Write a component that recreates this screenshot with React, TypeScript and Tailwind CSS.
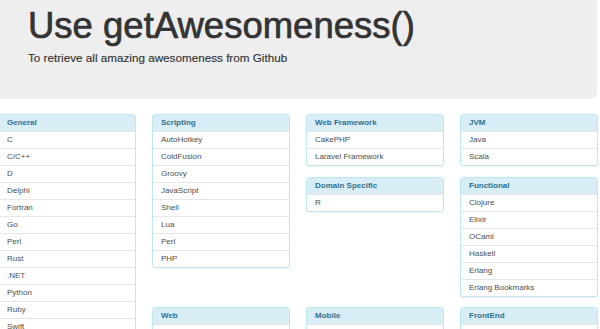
const general = ['C', 'C/C++', 'D', 'Delphi', 'Fortran', 'Go', 'Perl', 'Rust', '.NET', 'Python', 'Ruby', 'Swift'];

function Panel({ title, items, className = '' }: { title: string; items: string[]; className?: string }) {
  return (
    <div className={`rounded-[3px] border border-[#bce8f1] bg-white shadow-[0_1px_1px_rgba(0,0,0,0.05)] ${className}`}>
      <div className="flex h-[16px] items-center rounded-t-[2px] bg-[#d9edf7] px-[8px] text-[8px] font-bold text-[#31708f]">
        {title}
      </div>
      {items.map((item) => (
        <div key={item} className="flex h-[17px] items-center border-t border-[#e6e6e6] px-[8px] text-[8px] text-[#4d4d4d]">
          {item}
        </div>
      ))}
    </div>
  );
}

export default function App() {
  return (
    <div className="h-[329px] w-[600px] overflow-hidden bg-white font-['Liberation_Sans',Arial,sans-serif]">
      <div className="-ml-[2px] w-[600px]">
        {/* Jumbotron */}
        <div className="h-[99px] w-[599px] rounded-br-[6px] bg-[#eeeeee] pl-[30px] pt-[6px] text-[#333]">
          <h1 className="text-[36.5px] leading-[40px] [-webkit-text-stroke:0.7px_#333]">Use getAwesomeness()</h1>
          <p className="mt-[4px] text-[11.7px] leading-[16px] [-webkit-text-stroke:0.15px_#333]">To retrieve all amazing awesomeness from Github</p>
        </div>

        <div className="mt-[15px] flex gap-[16px]">
          <div className="w-[138px]">
            <Panel title="General" items={general} />
          </div>

          <div className="flex w-[446px] flex-col">
            <div className="flex items-start gap-[16px]">
              <div className="w-[138px]">
                <Panel title="Scripting" items={['AutoHotkey', 'ColdFusion', 'Groovy', 'JavaScript', 'Shell', 'Lua', 'Perl', 'PHP']} />
              </div>
              <div className="w-[138px]">
                <Panel title="Web Framework" items={['CakePHP', 'Laravel Framework']} className="mb-[11px]" />
                <Panel title="Domain Specific" items={['R']} />
              </div>
              <div className="w-[138px]">
                <Panel title="JVM" items={['Java', 'Scala']} className="mb-[11px]" />
                <Panel title="Functional" items={['Clojure', 'Elixir', 'OCaml', 'Haskell', 'Erlang', 'Erlang Bookmarks']} />
              </div>
            </div>

            <div className="mt-[10px] flex items-start gap-[16px]">
              <div className="w-[138px]">
                <Panel title="Web" items={['']} />
              </div>
              <div className="w-[138px]">
                <Panel title="Mobile" items={['']} />
              </div>
              <div className="w-[138px]">
                <Panel title="FrontEnd" items={['']} />
              </div>
            </div>
          </div>
        </div>
      </div>
    </div>
  );
}
